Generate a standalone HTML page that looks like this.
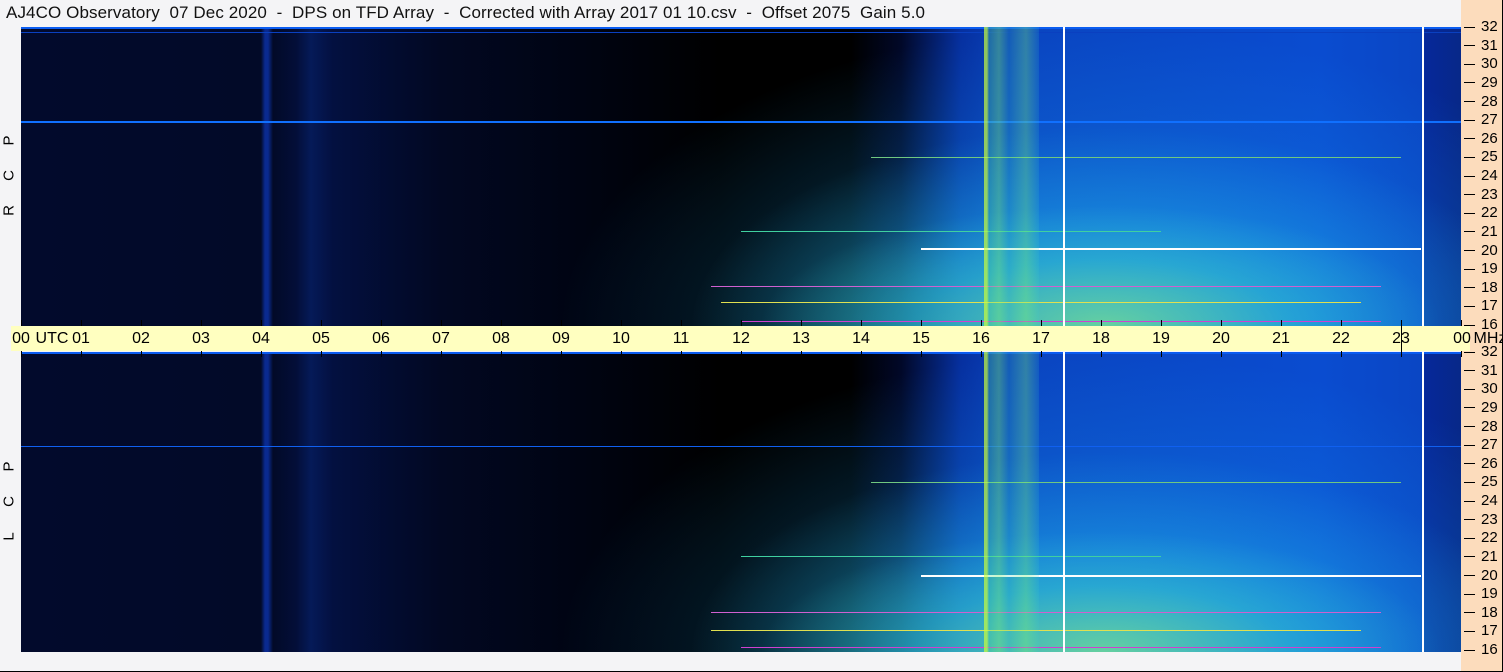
<!DOCTYPE html>
<html><head><meta charset="utf-8"><style>
*{margin:0;padding:0;box-sizing:border-box}
body{width:1503px;height:672px;overflow:hidden;background:#f4f4f6;font-family:"Liberation Sans","DejaVu Sans",sans-serif;position:relative}
.frame{position:absolute;left:0;top:0;width:1503px;height:672px;border-right:1px solid #000;border-bottom:1px solid #000}
.title{position:absolute;left:6px;top:3px;font-size:17px;color:#111;white-space:nowrap;letter-spacing:0.1px}
.peach{position:absolute;left:1461px;top:0;width:41px;height:671px;background:#fcdcbc}
.panel{position:absolute;left:21px;width:1440px;overflow:hidden;
background:
radial-gradient(ellipse 340px 120px at 1080px 100%,rgba(150,240,120,.55),rgba(60,210,200,.35) 55%,rgba(20,140,240,0) 100%),
radial-gradient(ellipse 420px 200px at 1090px 100%,rgba(70,220,200,.5),rgba(40,190,230,.35) 50%,rgba(20,140,240,0) 100%),
radial-gradient(ellipse 540px 300px at 1080px 100%,rgba(20,160,240,.5),rgba(10,100,230,0) 100%),
linear-gradient(to right,#020a2c 0,#020a28 240px,#0a2a90 244px,#0a2a90 247px,#020a28 252px,#030e38 275px,#051a58 290px,#031040 312px,#020822 420px,#000412 560px,#000 700px,#000 830px,#010828 880px,#0630a0 940px,#0a44c0 1000px,#0a4cd0 1300px,#0a46c4 1400px,#06289a 1404px,#072888 1440px);}
.vl{position:absolute;top:0;bottom:0}
.hl{position:absolute;height:2px}
.lbl{position:absolute;left:2px;font-size:15px;color:#000;transform:rotate(-90deg);width:14px;text-align:center}
.bar{position:absolute;left:11px;top:326px;width:1459px;height:25px;background:#ffffc0}
.hr{position:absolute;top:5px;font-size:16px;color:#000;transform:translateX(-50%)}
.tk{position:absolute;width:1px;background:#000}
.ax{position:absolute;left:1464px;font-size:15px;color:#000;white-space:nowrap}
.ax span{display:inline-block;width:11px;height:1px;background:#000;vertical-align:middle;margin-right:6px}
</style></head><body>
<div class="peach"></div>
<div class="title">AJ4CO Observatory&nbsp; 07 Dec 2020&nbsp; -&nbsp; DPS on TFD Array&nbsp; -&nbsp; Corrected with Array 2017 01 10.csv&nbsp; -&nbsp; Offset 2075&nbsp; Gain 5.0</div>

<div class="panel" style="top:27px;height:299px">
 <div class="hl" style="left:0;right:0;top:0;height:2px;background:#0a5cf0"></div>
 <div class="hl" style="left:0;right:0;top:5px;height:1px;background:#0a40c0"></div>
 <div class="hl" style="left:0;right:0;top:94px;height:2px;background:#1070ff"></div>
 <div class="hl" style="left:850px;right:60px;top:130px;background:#70c880;height:1px"></div>
 <div class="hl" style="left:900px;right:40px;top:221px;background:#ffffff"></div>
 <div class="hl" style="left:720px;right:300px;top:204px;background:#40d0a0;height:1px"></div>
 <div class="hl" style="left:690px;right:80px;top:259px;background:#d060d0;height:1px"></div>
 <div class="hl" style="left:700px;right:100px;top:275px;background:#e0e050;height:1px"></div>
 <div class="hl" style="left:720px;right:80px;top:294px;background:#d040d0;height:1px"></div>
 <div class="vl" style="left:963px;width:55px;background:linear-gradient(to right,rgba(200,255,60,.7) 0,rgba(200,255,60,.7) 3px,rgba(80,220,150,.3) 5px,rgba(120,240,120,.4) 15px,rgba(60,200,180,.2) 25px,rgba(120,240,120,.35) 42px,rgba(60,200,200,.15) 55px)"></div>
 <div class="vl" style="left:1042px;width:2px;background:#fff"></div>
 <div class="vl" style="left:1401px;width:2px;background:#fff"></div>
</div>
<div class="lbl" style="top:132px">P</div><div class="lbl" style="top:167px">C</div><div class="lbl" style="top:202px">R</div>

<div class="bar"></div>
<div class="tk" style="left:1401px;top:320px;height:37px"></div>

<div class="panel" style="top:352px;height:300px">
 <div class="hl" style="left:0;right:0;top:0;height:2px;background:#0a5cf0"></div>
 <div class="hl" style="left:0;right:0;top:94px;height:1px;background:#1060f0"></div>
 <div class="hl" style="left:850px;right:60px;top:130px;background:#70c880;height:1px"></div>
 <div class="hl" style="left:900px;right:40px;top:223px;background:#ffffff"></div>
 <div class="hl" style="left:720px;right:300px;top:204px;background:#40d0a0;height:1px"></div>
 <div class="hl" style="left:690px;right:80px;top:260px;background:#d060d0;height:1px"></div>
 <div class="hl" style="left:690px;right:100px;top:278px;background:#e0e050;height:1px"></div>
 <div class="hl" style="left:720px;right:80px;top:295px;background:#d040d0;height:1px"></div>
 <div class="vl" style="left:963px;width:55px;background:linear-gradient(to right,rgba(200,255,60,.7) 0,rgba(200,255,60,.7) 3px,rgba(80,220,150,.3) 5px,rgba(120,240,120,.4) 15px,rgba(60,200,180,.2) 25px,rgba(120,240,120,.35) 42px,rgba(60,200,200,.15) 55px)"></div>
 <div class="vl" style="left:1042px;width:2px;background:#fff"></div>
 <div class="vl" style="left:1401px;width:2px;background:#fff"></div>
</div>
<div class="lbl" style="top:458px">P</div><div class="lbl" style="top:493px">C</div><div class="lbl" style="top:528px">L</div>

<div id="hours"></div>
<div id="axis"></div>
<script>
var h='';
for(var i=0;i<=24;i++){var x=21+60*i;var t=(i%24<10?'0':'')+(i%24);
 if(i==0)h+='<div class="hr" style="left:'+x+'px;top:330px">00</div><div class="hr" style="left:'+(x+31)+'px;top:330px">UTC</div>';
 else if(i==24)h+='<div class="hr" style="left:'+(x+1)+'px;top:330px">00</div><div class="hr" style="left:'+(x+29)+'px;top:330px">MHz</div>';
 else h+='<div class="hr" style="left:'+x+'px;top:330px">'+t+'</div>';
 h+='<div class="tk" style="left:'+x+'px;top:320px;height:6px"></div><div class="tk" style="left:'+x+'px;top:351px;height:6px"></div>';}
document.getElementById('hours').innerHTML=h;
var a='';
for(var p=0;p<2;p++){var y0=p?352:27,y1=p?650:325;
 for(var k=0;k<16;k++){var y=y0+(y1-y0)*k/16;
  a+='<div class="ax" style="top:'+(y-9)+'px"><span></span>'+(32-k)+'</div>';}
 a+='<div class="ax" style="top:'+(y1-9)+'px"><span></span>16</div>';}
document.getElementById('axis').innerHTML=a;
</script>
<div class="frame"></div>
</body></html>
